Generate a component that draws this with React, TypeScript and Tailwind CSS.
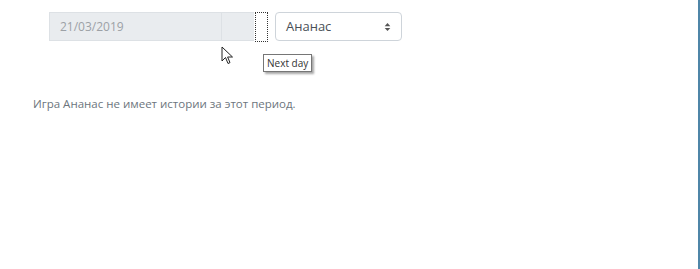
import React from "react";

function Cursor() {
  return (
    <svg width="13" height="19" viewBox="0 0 13 19" className="absolute left-[221px] top-[46px]">
      <path
        d="M1 1 L1 15 L4.5 11.5 L7 17.5 L9 16.6 L6.6 11 L11.5 11 Z"
        fill="#fff"
        stroke="#222"
        strokeWidth="1"
        strokeLinejoin="round"
      />
    </svg>
  );
}

function SortArrows() {
  return (
    <svg width="7" height="10" viewBox="0 0 8 10">
      <path d="M4 0.5 L7.2 4 L0.8 4 Z" fill="#555" />
      <path d="M4 9.5 L7.2 6 L0.8 6 Z" fill="#555" />
    </svg>
  );
}

export default function App() {
  return (
    <div
      className="relative w-[700px] h-[269px] bg-white overflow-hidden"
      style={{ fontFamily: '"Open Sans", "Noto Sans", sans-serif' }}
    >
      <div className="flex items-start pl-[49px] pt-[12px]">
        <div className="flex h-[29px]">
          <div className="w-[173px] bg-[#e9ecef] border border-[#dde1e5] flex items-center pl-[10px] text-[12px] text-[#9ca1a6]">
            21/03/2019
          </div>
          <div className="w-[32px] bg-[#e9ecef] border-y border-[#dde1e5]" />
          <div className="relative ml-[1px] w-[13px] h-[30px] border border-dotted border-[#333] bg-white">
            <div className="absolute left-[7px] top-[41px] whitespace-nowrap bg-white border border-[#767676] px-[3px] text-[10px] leading-[16px] text-[#333] shadow-[2px_2px_2px_rgba(0,0,0,0.35)]">
              Next day
            </div>
          </div>
          <div className="ml-[7px] w-[127px] h-[29px] border border-[#ced4da] rounded-[4px] flex items-center justify-between pl-[10px] pr-[10px] text-[13px] text-[#495057]">
            <span>Ананас</span>
            <SortArrows />
          </div>
        </div>
      </div>
      <p className="pl-[33px] mt-[54px] text-[11.5px] text-[#6c757d]">
        Игра Ананас не имеет истории за этот период.
      </p>
      <div className="absolute right-0 top-0 w-[2px] h-full bg-[#4f86a8]" />
      <Cursor />
    </div>
  );
}
